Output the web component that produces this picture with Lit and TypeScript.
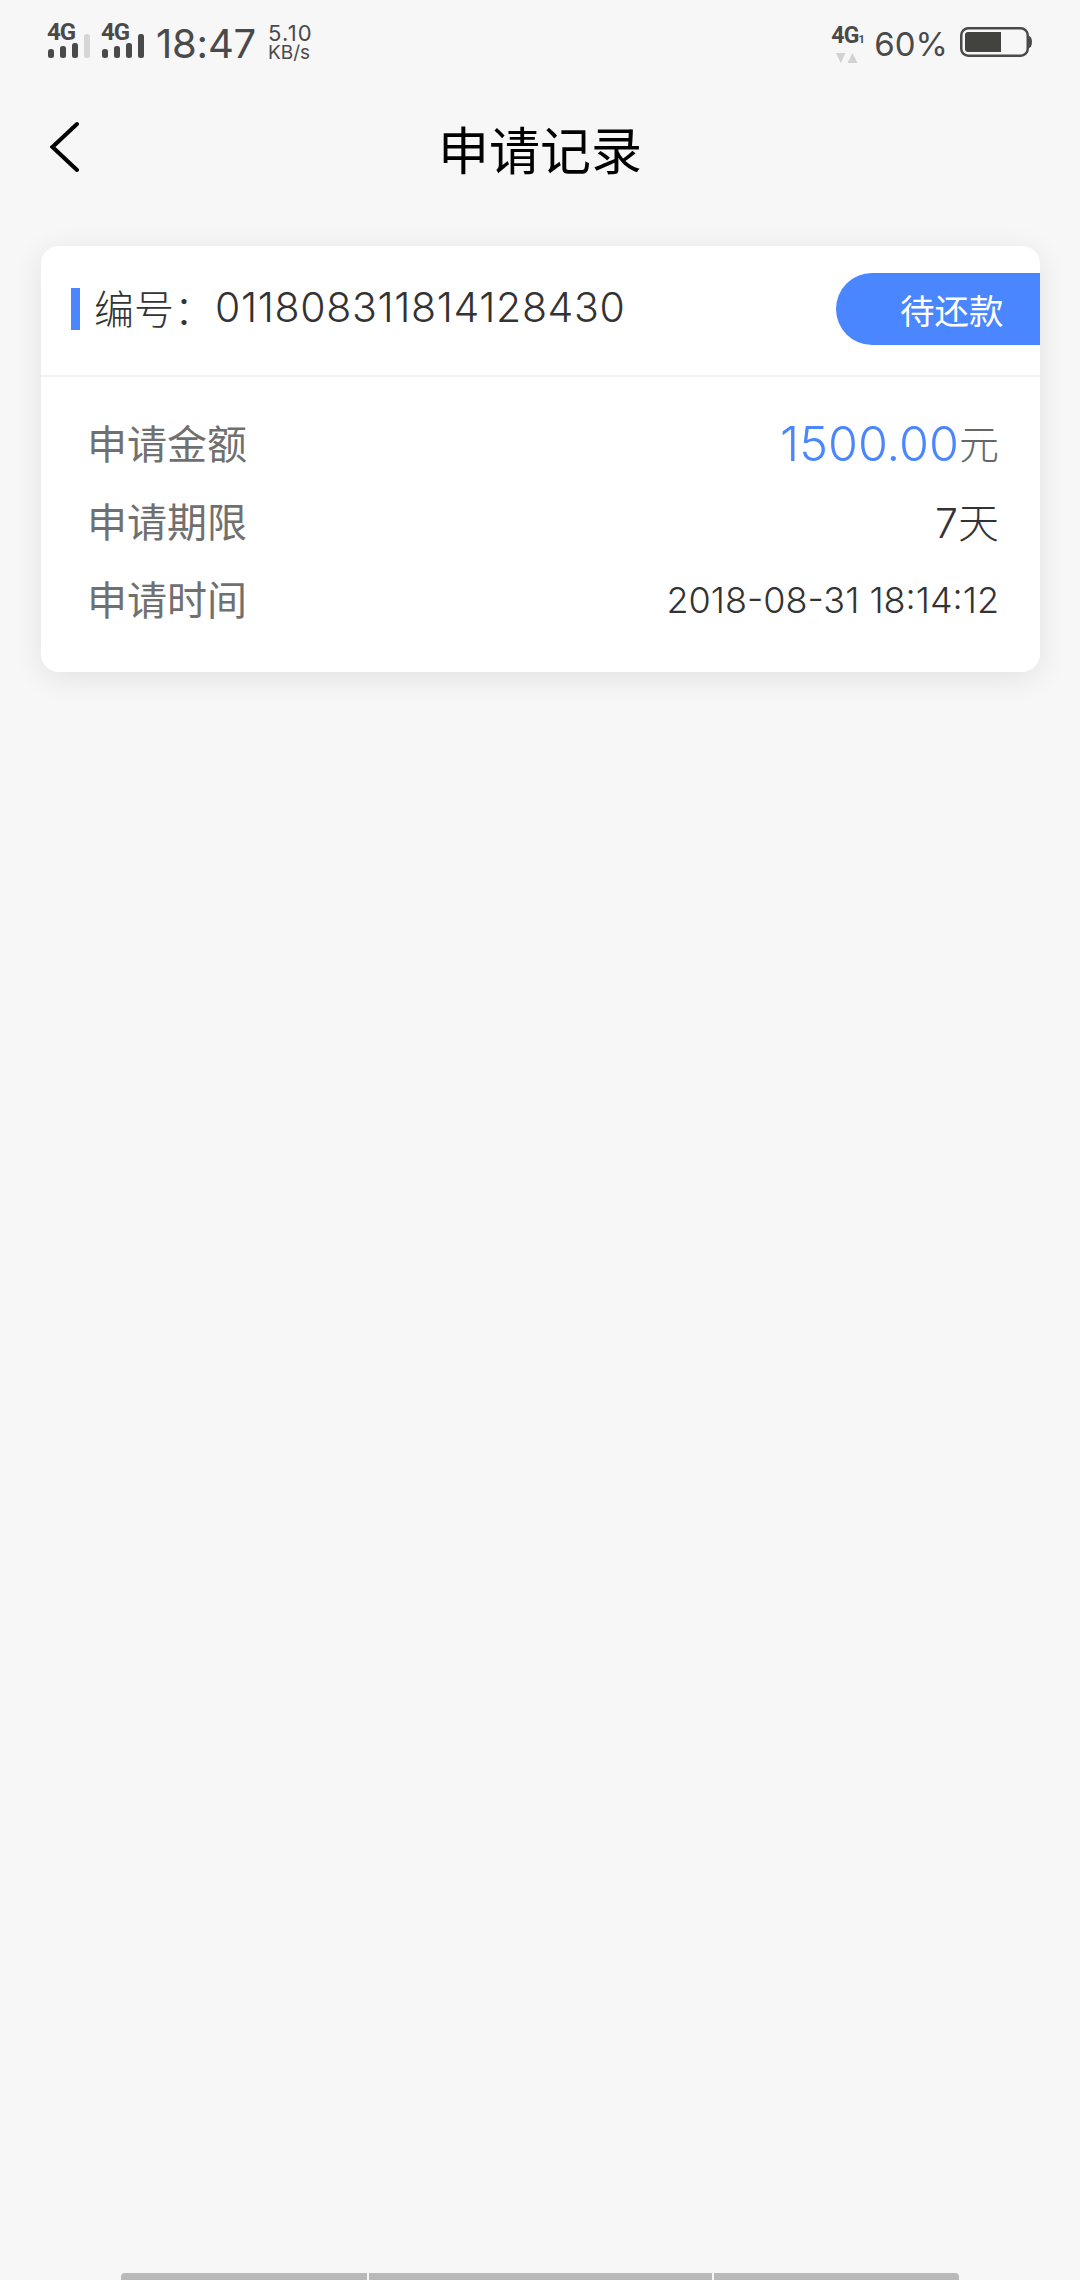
import { LitElement, html, css, svg } from "lit";
import { customElement } from "lit/decorators.js";

const bars = (last: string) => svg`<svg class="bars" width="42" height="24" viewBox="0 0 42 24">
  <rect x="0" y="15" width="6" height="9" rx="2.500" fill="#4a4a4a"/>
  <rect x="12" y="12" width="6" height="12" rx="2.500" fill="#4a4a4a"/>
  <rect x="24" y="9" width="6" height="15" rx="2.500" fill="#4a4a4a"/>
  <rect x="36" y="0" width="6" height="24" rx="2.500" fill="${last}"/>
</svg>`;

@customElement("app-root")
export class AppRoot extends LitElement {
  static styles = css`
    :host {
      display: flex;
      flex-direction: column;
      width: 1080px;
      height: 2280px;
      background: #f7f7f7;
      font-family: Inter, "Noto Sans CJK SC", sans-serif;
      font-weight: 300;
      overflow: hidden;
    }
    .status {
      height: 86px;
      box-sizing: border-box;
      padding: 22px 48px 0 48px;
      display: flex;
      justify-content: space-between;
      align-items: flex-start;
      color: #4a4a4a;
    }
    .side { display: flex; align-items: flex-start; }
    .sig { display: flex; flex-direction: column; width: 42px; margin-right: 12px; height: 37px; margin-top: 12px; position: relative; }
    .sig .g {
      position: absolute;
      left: -1px;
      top: -14px;
      font: 700 24px/24px Roboto, sans-serif;
      letter-spacing: -1px;
      color: #4a4a4a;
    }
    .bars { display: block; }
    .time { font-size: 40px; line-height: 44px; font-weight: 400; margin: 0 12px 0 0; letter-spacing: -0.2px; }
    .speed { display: flex; flex-direction: column; font-weight: 400; padding-top: 1px; }
    .speed .a { font-size: 22px; line-height: 20px; letter-spacing: 1.2px; }
    .speed .b { font-size: 19px; line-height: 20px; }
    .net { display: flex; flex-direction: column; align-items: flex-start; width: 32px; margin-top: 2px; }
    .net .g { font: 700 23px/24px Roboto, sans-serif; letter-spacing: -0.8px; color: #4a4a4a; white-space: nowrap; }
    .net .g small { font-size: 11px; letter-spacing: 0; }
    .tri { display: block; margin: 1px 0 0 5px; }
    .pct { font-size: 33px; line-height: 40px; font-weight: 400; margin: 2px 12px 0 11px; }
    .batt { display: block; margin-top: 5px; }

    .header {
      margin-top: 20px;
      height: 84px;
      display: flex;
      align-items: center;
      justify-content: center;
      position: relative;
      color: #000;
      font-size: 51px;
      font-weight: 400;
    }
    .back { position: absolute; left: 50px; top: 14px; display: block; }

    .card {
      margin: 56px 40px 0 41px;
      background: #fff;
      border-radius: 18px;
      box-shadow: 0 6px 30px rgba(0, 0, 0, 0.09);
      overflow: hidden;
    }
    .top {
      height: 131px;
      box-sizing: border-box;
      border-bottom: 2px solid #f2f2f2;
      display: flex;
      align-items: flex-start;
      justify-content: space-between;
      padding-top: 27px;
    }
    .no {
      display: flex;
      align-items: center;
      height: 72px;
      padding-left: 30px;
      font-size: 40px;
      color: #333;
    }
    .no i { width: 9px; height: 42px; background: #4a86ff; margin-right: 14px; }
    .no .lbl { width: 121px; padding-bottom: 4px; }
    .no .num { font-size: 41px; letter-spacing: 0.65px; padding-bottom: 4px; }
    .tag {
      width: 204px;
      height: 72px;
      box-sizing: border-box;
      background: #4a86ff;
      color: #fff;
      border-radius: 36px 0 0 36px;
      display: flex;
      align-items: center;
      padding-left: 64px;
      font-size: 34.500px;
      font-weight: 400;
    }
    .rows { padding: 26px 41px 35px 46px; display: flex; flex-direction: column; }
    .row {
      height: 78px;
      display: flex;
      align-items: center;
      justify-content: space-between;
      font-size: 40px;
      color: #666;
    }
    .row > span:first-child { font-weight: 400; color: #707070; }
    .v { display: flex; align-items: center; color: #666; }
    .amt { color: #4a86ff; font-size: 48.500px; padding-top: 2px; }
    .days { color: #333; font-size: 41px; }
    .date { color: #333; font-size: 36px; padding-top: 3px; }

    .nav {
      margin: auto 121px 0 121px;
      height: 7px;
      display: flex;
      gap: 2px;
    }
    .nav span { background: #b9b9b9; display: block; }
    .nav .s1 { width: 246px; border-radius: 4px 0 0 0; }
    .nav .s2 { width: 343px; }
    .nav .s3 { flex: 1; border-radius: 0 4px 0 0; }
  `;

  render() {
    return html`
      <div class="status">
        <div class="side">
          <div class="sig"><span class="g">4G</span>${bars("#d6d6d6")}</div>
          <div class="sig"><span class="g">4G</span>${bars("#4a4a4a")}</div>
          <span class="time">18:47</span>
          <div class="speed"><span class="a">5.10</span><span class="b">KB/s</span></div>
        </div>
        <div class="side">
          <div class="net">
            <span class="g">4G<small>1</small></span>
            <svg class="tri" width="22" height="10" viewBox="0 0 22 10">
              <path d="M0 0h9.500L4.750 10zM11.500 10h10L16.500 0z" fill="#d2d2d2"/>
            </svg>
          </div>
          <span class="pct">60%</span>
          <svg class="batt" width="72" height="30" viewBox="0 0 72 30">
            <rect x="1.250" y="1.250" width="66.500" height="27.500" rx="7" fill="none" stroke="#4a4a4a" stroke-width="2.500"/>
            <path d="M8 5h33v20H8a3 3 0 0 1-3-3V8a3 3 0 0 1 3-3z" fill="#42423e"/>
            <path d="M69 9a3 6 0 0 1 0 12z" fill="#4a4a4a"/>
          </svg>
        </div>
      </div>
      <div class="header">
        <svg class="back" width="30" height="54" viewBox="0 0 30 54">
          <path d="M27 4 L2.500 27 L27 50" fill="none" stroke="#000" stroke-width="4" stroke-linecap="round" stroke-linejoin="miter"/>
        </svg>
        申请记录
      </div>
      <div class="card">
        <div class="top">
          <div class="no"><i></i><span class="lbl">编号：</span><span class="num">011808311814128430</span></div>
          <div class="tag">待还款</div>
        </div>
        <div class="rows">
          <div class="row"><span>申请金额</span><span class="v"><span class="amt">1500.00</span>元</span></div>
          <div class="row"><span>申请期限</span><span class="days">7天</span></div>
          <div class="row"><span>申请时间</span><span class="date">2018-08-31 18:14:12</span></div>
        </div>
      </div>
      <div class="nav"><span class="s1"></span><span class="s2"></span><span class="s3"></span></div>
    `;
  }
}
